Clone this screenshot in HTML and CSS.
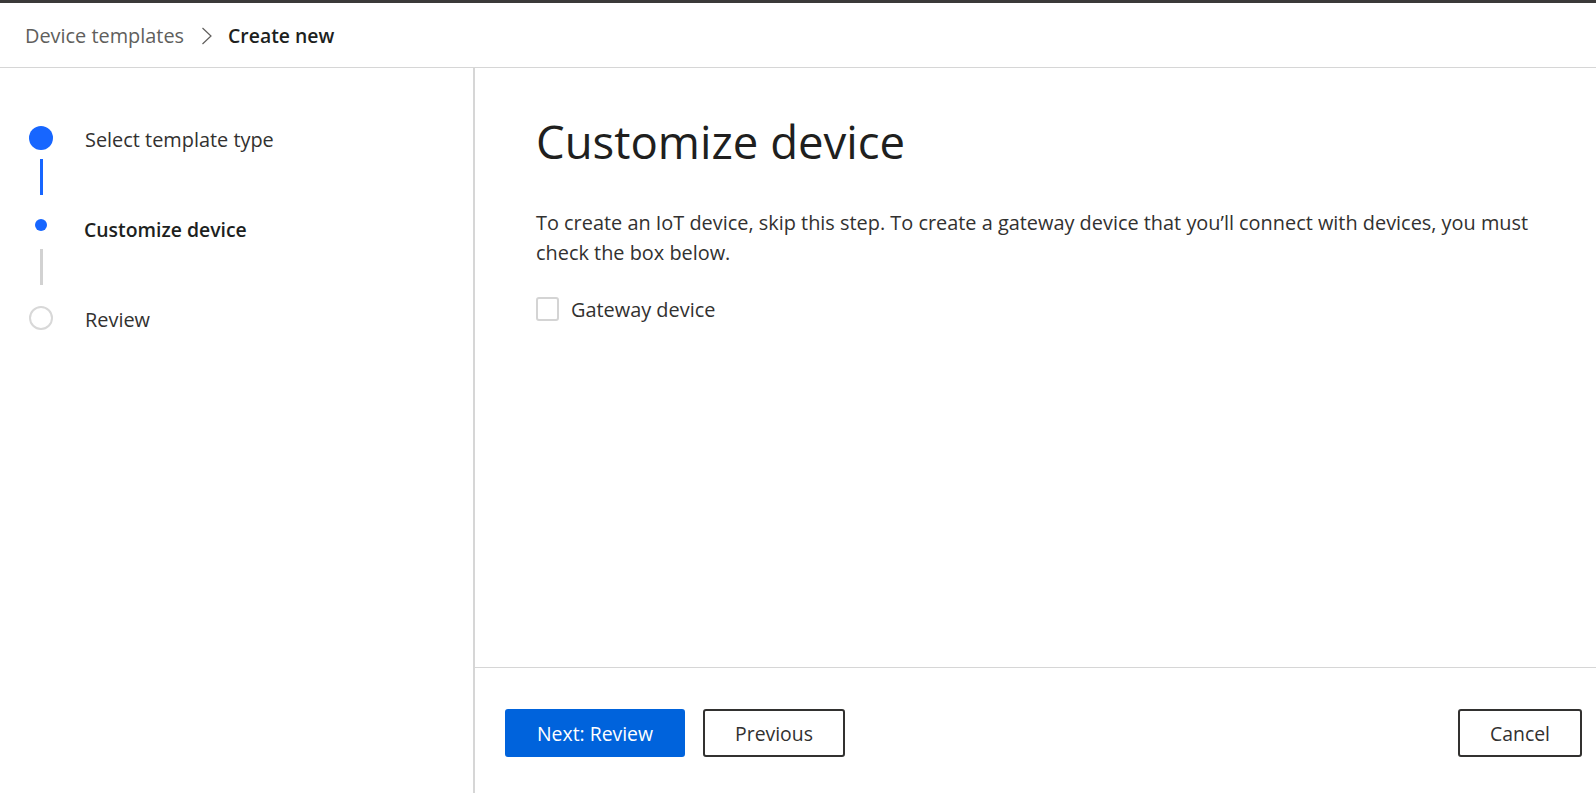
FILE: index.html
```html
<!DOCTYPE html>
<html lang="en">
<head>
<meta charset="utf-8">
<title>Create new device template</title>
<link rel="stylesheet" href="styles.css">
</head>
<body>
<div class="topbar"></div>
<header class="header">
  <nav class="breadcrumb">
    <span class="crumb">Device templates</span>
    <svg class="chevron" width="12" height="18" viewBox="0 0 12 18" aria-hidden="true"><path d="M1.5 1 L10 9 L1.5 17" fill="none" stroke="#605e5c" stroke-width="1.2"/></svg>
    <span class="crumb current">Create new</span>
  </nav>
</header>
<div class="layout">
  <aside class="steps">
    <div class="step">
      <span class="ind"><span class="dot done"></span></span>
      <span class="label">Select template type</span>
    </div>
    <div class="connector c1"><span class="line active"></span></div>
    <div class="step">
      <span class="ind"><span class="dot current"></span></span>
      <span class="label bold">Customize device</span>
    </div>
    <div class="connector c2"><span class="line"></span></div>
    <div class="step">
      <span class="ind"><span class="dot todo"></span></span>
      <span class="label">Review</span>
    </div>
  </aside>
  <main class="main">
    <section class="content">
      <h1 class="title">Customize device</h1>
      <p class="desc">To create an IoT device, skip this step. To create a gateway device that you’ll connect with devices, you must check the box below.</p>
      <label class="check">
        <span class="box"></span>
        <span class="check-label">Gateway device</span>
      </label>
    </section>
    <footer class="footer">
      <button class="btn primary">Next: Review</button>
      <button class="btn">Previous</button>
      <span class="spacer"></span>
      <button class="btn">Cancel</button>
    </footer>
  </main>
</div>
</body>
</html>
```

FILE: styles.css
```css
* { box-sizing: border-box; }
html, body { margin: 0; padding: 0; height: 100%; }
body {
  font-family: "Open Sans", "Noto Sans", "Liberation Sans", sans-serif;
  color: #323130;
  background: #fff;
  display: flex;
  flex-direction: column;
  overflow: hidden;
}
.topbar { height: 3px; background: #3b3a39; flex: none; }
.header {
  height: 65px;
  flex: none;
  border-bottom: 1px solid #d6d6d6;
  display: flex;
  align-items: center;
  padding: 2px 0 0 25px;
}
.breadcrumb { display: flex; align-items: center; font-size: 19.9px; line-height: 24px; }
.crumb { color: #605e5c; }
.crumb.current { color: #201f1e; font-weight: 600; font-size: 19.4px; }
.chevron { margin: 0 15px 0 17px; display: block; }

.layout { flex: 1; display: flex; min-height: 0; }
.steps {
  width: 475px;
  flex: none;
  border-right: 2px solid #d6d6d6;
  padding: 58px 0 0 29px;
}
.step { display: flex; align-items: center; height: 24px; }
.ind { width: 24px; height: 24px; display: flex; align-items: center; justify-content: center; flex: none; }
.label { margin-left: 32px; padding-top: 3px; font-size: 19.9px; line-height: 24px; color: #323130; white-space: nowrap; }
.label.bold { font-weight: 600; color: #201f1e; padding-top: 10px; font-size: 19.4px; margin-left: 31px; }
.dot { display: block; border-radius: 50%; }
.dot.done { width: 24px; height: 24px; background: #1766ff; }
.dot.current { width: 12px; height: 12px; background: #1766ff; }
.dot.todo { width: 24px; height: 24px; border: 2px solid #d8d8d8; }
.connector { width: 24px; display: flex; justify-content: center; }
.connector.c1 { padding: 9px 0 18px; }
.connector.c2 { padding: 12px 0 21px; }
.line { display: block; width: 3px; height: 36px; background: #d2d2d2; }
.line.active { background: #1766ff; }

.main { flex: 1; display: flex; flex-direction: column; min-width: 0; }
.content { flex: 1; padding: 46px 40px 0 61px; }
.title {
  margin: 0;
  font-size: 45.5px;
  line-height: 54px;
  font-weight: 400;
  color: #201f1e;
}
.desc {
  margin: 40px 0 0;
  font-size: 19.9px;
  line-height: 30px;
  color: #323130;
}
.check { display: flex; align-items: center; margin-top: 29px; height: 24px; }
.box {
  width: 23px; height: 24px;
  border: 2px solid #d4d4d4;
  border-radius: 3px;
  flex: none;
}
.check-label { margin-left: 12px; padding-top: 2px; font-size: 19.9px; line-height: 24px; color: #323130; }

.footer {
  flex: none;
  height: 126px;
  border-top: 1px solid #d6d6d6;
  display: flex;
  align-items: flex-start;
  padding: 41px 14px 0 30px;
  gap: 18px;
}
.spacer { flex: 1; }
.btn {
  height: 48px;
  padding: 0 30px;
  font-family: inherit;
  font-size: 19.4px;
  color: #323130;
  background: #fff;
  border: 2px solid #323130;
  border-radius: 3px;
}
.btn.primary { background: #0063dc; border-color: #0063dc; color: #fff; }
```
